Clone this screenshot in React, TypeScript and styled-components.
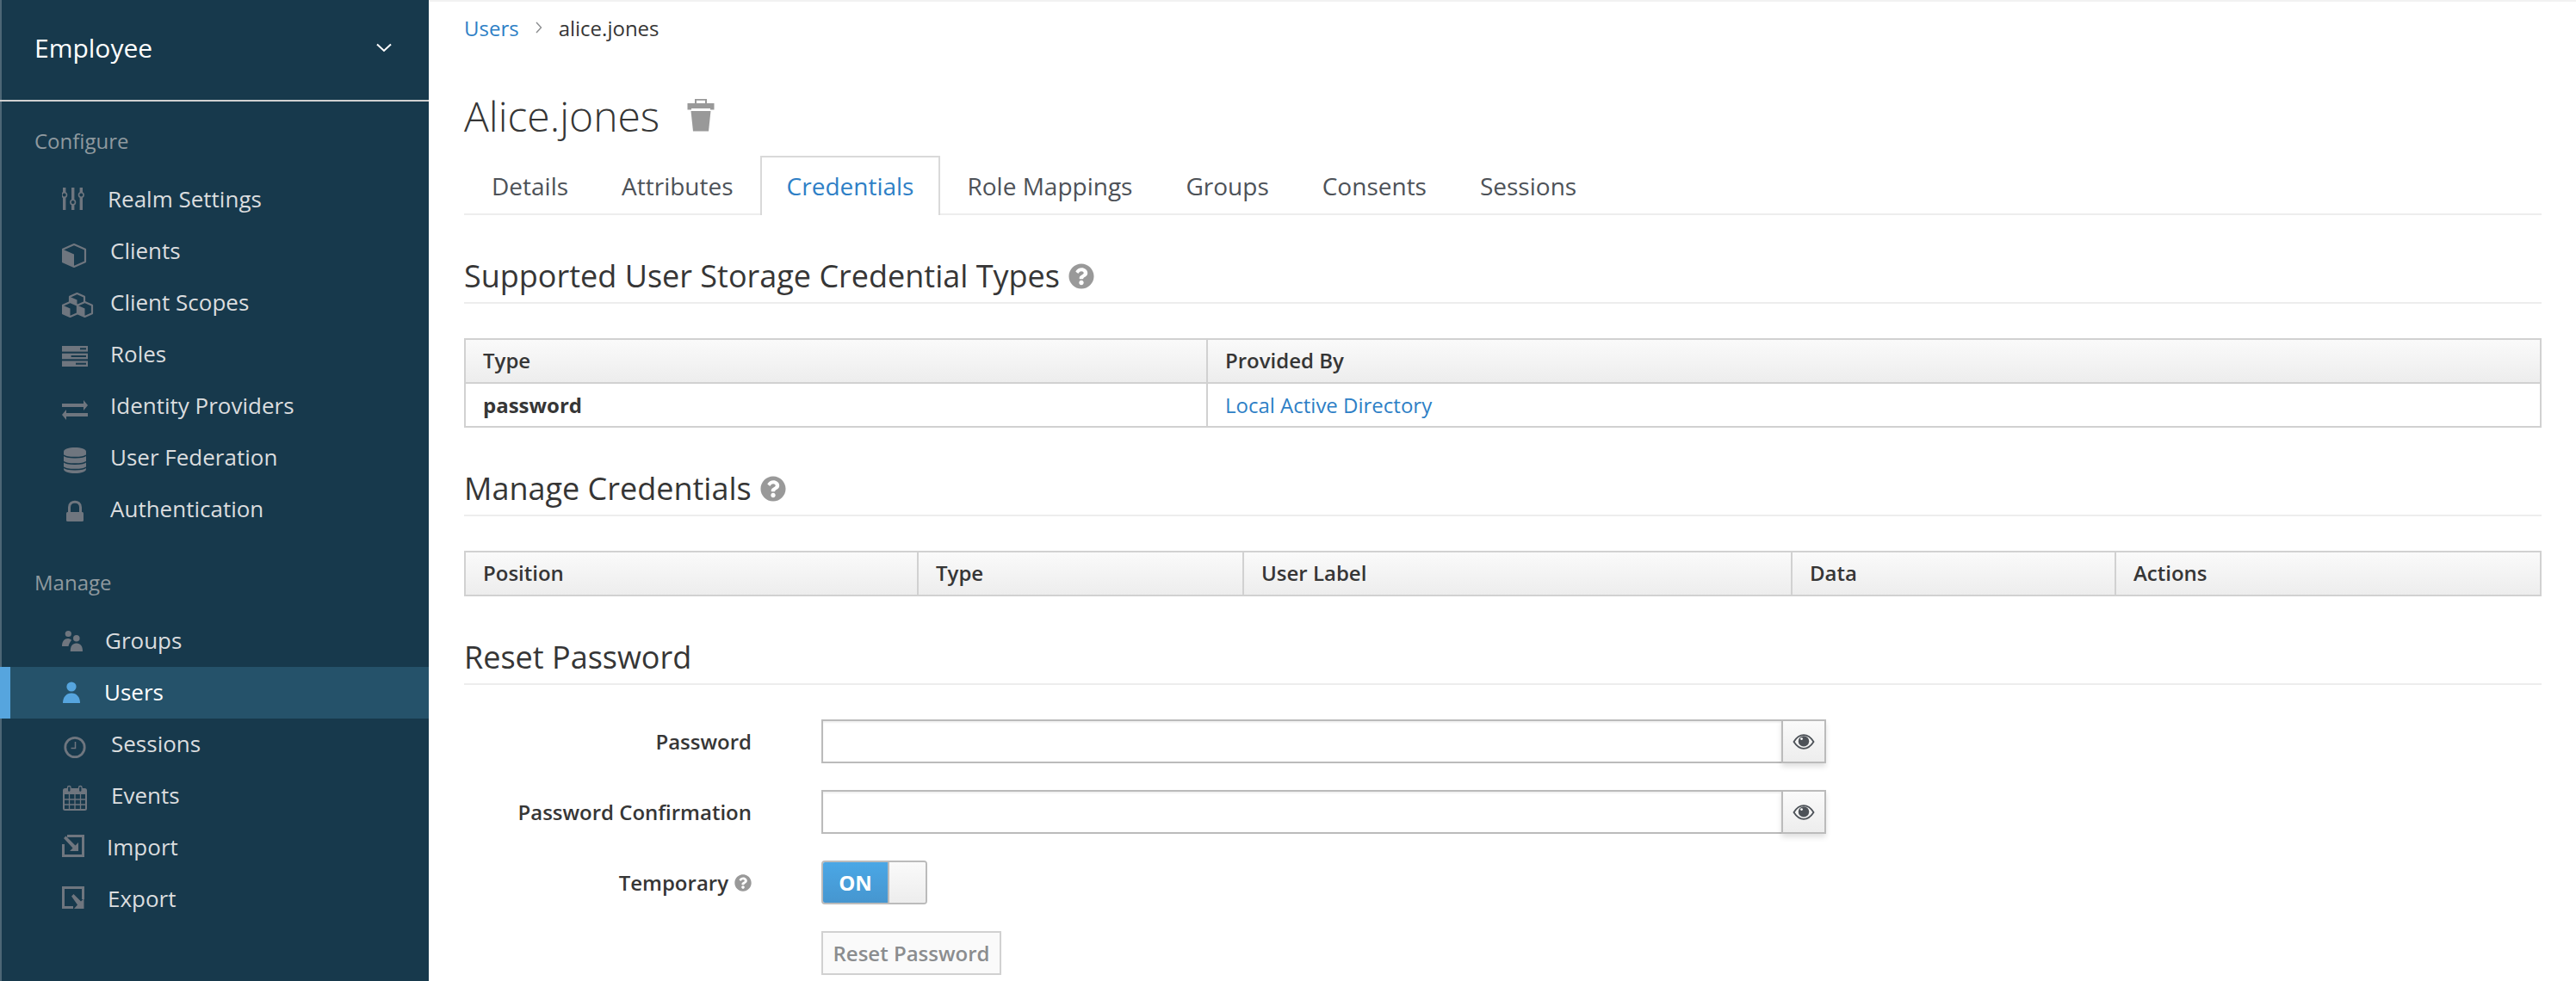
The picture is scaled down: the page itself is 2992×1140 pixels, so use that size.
import { ReactNode } from 'react';
import styled, { createGlobalStyle } from 'styled-components';
import { FaQuestionCircle } from 'react-icons/fa';

const ICON_COLOR = '#6f767f';
const SIDEBAR_BG = '#17394c';

function MiniCube({ x, y, size }: { x: number; y: number; size: number }) {
  const w = size;
  const h = size;
  const cx = x + w / 2;
  const quarter = h * 0.22;
  return (
    <g>
      <path
        d={`M${cx} ${y} L${x + w} ${y + quarter} V${y + h - quarter} L${cx} ${y + h} L${x} ${y + h - quarter} V${y + quarter} Z`}
        fill={SIDEBAR_BG}
        stroke={ICON_COLOR}
        strokeWidth={2.2}
        strokeLinejoin="round"
      />
      <path
        d={`M${x} ${y + quarter} L${cx} ${y + quarter * 2} V${y + h} L${x} ${y + h - quarter} Z`}
        fill={ICON_COLOR}
      />
    </g>
  );
}

const icons: Record<string, ReactNode> = {
  sliders: (
    <>
      <rect x="1" y="6" width="3.4" height="26" fill={ICON_COLOR} />
      <rect x="11" y="6" width="3.4" height="26" fill={ICON_COLOR} />
      <rect x="20.6" y="6" width="3.4" height="26" fill={ICON_COLOR} />
      <circle cx="2.7" cy="14.5" r="2.8" fill={SIDEBAR_BG} stroke={ICON_COLOR} strokeWidth="1.6" />
      <circle cx="12.7" cy="23" r="2.8" fill={SIDEBAR_BG} stroke={ICON_COLOR} strokeWidth="1.6" />
      <circle cx="22.3" cy="14.5" r="2.8" fill={SIDEBAR_BG} stroke={ICON_COLOR} strokeWidth="1.6" />
    </>
  ),
  cube: <MiniCube x={1} y={12} size={26} />,
  cubes: (
    <>
      <MiniCube x={9} y={9} size={17} />
      <MiniCube x={1} y={19} size={17} />
      <MiniCube x={18} y={19} size={17} />
    </>
  ),
  server: (
    <>
      <rect x="0" y="10" width="30" height="6.6" fill={ICON_COLOR} />
      <rect x="0" y="18.7" width="30" height="6.6" fill={ICON_COLOR} />
      <rect x="0" y="27.4" width="30" height="6.6" fill={ICON_COLOR} />
      <rect x="21" y="12.3" width="7" height="2" fill={SIDEBAR_BG} />
      <rect x="10.6" y="21" width="17.4" height="2" fill={SIDEBAR_BG} />
      <rect x="16" y="29.7" width="12" height="2" fill={SIDEBAR_BG} />
    </>
  ),
  exchange: (
    <path
      d="M0 17H25V13L30 19L25 25V21H0ZM30 28H5V24L0 30L5 36V32H30Z"
      fill={ICON_COLOR}
    />
  ),
  database: (
    <>
      <path
        d="M2 13C2 9.5 8 8 15 8S28 9.5 28 13V33C28 36.5 22 38 15 38S2 36.5 2 33Z"
        fill={ICON_COLOR}
      />
      <path
        d="M2 17C5 20.5 25 20.5 28 17M2 24.5C5 28 25 28 28 24.5M2 31C5 34.5 25 34.5 28 31"
        fill="none"
        stroke={SIDEBAR_BG}
        strokeWidth="1.6"
      />
    </>
  ),
  lock: (
    <>
      <path d="M8.5 24V17.5C8.5 9 21.5 9 21.5 17.5V24" fill="none" stroke={ICON_COLOR} strokeWidth="3" />
      <rect x="5" y="23" width="20" height="11" rx="1.5" fill={ICON_COLOR} />
    </>
  ),
  groups: (
    <>
      <circle cx="7.3" cy="11.5" r="3.6" fill={ICON_COLOR} />
      <path d="M0 26C0 20 3 17 7 17C9 17 10.5 18 11 19C9.5 21 8 23 7.5 26Z" fill={ICON_COLOR} />
      <circle cx="16.8" cy="16.8" r="3.8" fill={ICON_COLOR} />
      <path d="M9.7 32C9.7 26 12 22.5 16.8 22.5S24 26 24 32Z" fill={ICON_COLOR} />
    </>
  ),
  user: (
    <>
      <circle cx="11" cy="13" r="5.6" fill="#56a5de" />
      <path d="M1 32C1 25 5 20.5 11 20.5S21 25 21 32Z" fill="#56a5de" />
    </>
  ),
  clock: (
    <>
      <circle cx="15" cy="23.5" r="11.2" fill="none" stroke={ICON_COLOR} strokeWidth="2.8" />
      <path d="M15.5 17V24.5H10.5" fill="none" stroke={ICON_COLOR} strokeWidth="1.5" />
    </>
  ),
  calendar: (
    <>
      <rect x="2" y="12" width="26" height="24" rx="1.5" fill="none" stroke={ICON_COLOR} strokeWidth="2" />
      <rect x="2" y="12" width="26" height="6" fill={ICON_COLOR} />
      <path
        d="M8.5 18V36M15 18V36M21.5 18V36M2 24H28M2 30H28"
        fill="none"
        stroke={ICON_COLOR}
        strokeWidth="1.3"
      />
      <rect x="6.5" y="8.5" width="3.6" height="7" rx="1.8" fill={SIDEBAR_BG} stroke={ICON_COLOR} strokeWidth="1.3" />
      <rect x="19.5" y="8.5" width="3.6" height="7" rx="1.8" fill={SIDEBAR_BG} stroke={ICON_COLOR} strokeWidth="1.3" />
    </>
  ),
  import: (
    <>
      <path d="M6 6.5H24.5V29.5H1.5V16" fill="none" stroke={ICON_COLOR} strokeWidth="3" />
      <path
        d="M2 9L4.5 6.5L15.5 17.5L19 14V24H9L12.5 20.5Z"
        fill={ICON_COLOR}
      />
    </>
  ),
  export: (
    <>
      <path d="M13 29.5H1.5V6.5H24.5V20" fill="none" stroke={ICON_COLOR} strokeWidth="3" />
      <path
        d="M11 16.5L13.5 14L22 22.5L25.5 19V31H14L18 26.5Z"
        fill={ICON_COLOR}
      />
    </>
  ),
};

const configureItems = [
  { label: 'Realm Settings', icon: 'sliders', slot: 53 },
  { label: 'Clients', icon: 'cube', slot: 56 },
  { label: 'Client Scopes', icon: 'cubes', slot: 56 },
  { label: 'Roles', icon: 'server', slot: 56 },
  { label: 'Identity Providers', icon: 'exchange', slot: 56 },
  { label: 'User Federation', icon: 'database', slot: 56 },
  { label: 'Authentication', icon: 'lock', slot: 56 },
];

const manageItems = [
  { label: 'Groups', icon: 'groups', slot: 50 },
  { label: 'Users', icon: 'user', slot: 49, active: true },
  { label: 'Sessions', icon: 'clock', slot: 57 },
  { label: 'Events', icon: 'calendar', slot: 57 },
  { label: 'Import', icon: 'import', slot: 52 },
  { label: 'Export', icon: 'export', slot: 53 },
];

const tabs = ['Details', 'Attributes', 'Credentials', 'Role Mappings', 'Groups', 'Consents', 'Sessions'];

function NavList({ items }: { items: typeof manageItems }) {
  return (
    <NavItems>
      {items.map((item) => (
        <NavItem key={item.label} $active={item.active}>
          <NavIconSlot $slot={item.slot}>
            <NavIcon viewBox="0 0 40 40">{icons[item.icon]}</NavIcon>
          </NavIconSlot>
          <NavLabel>{item.label}</NavLabel>
        </NavItem>
      ))}
    </NavItems>
  );
}

function PasswordField({ label }: { label: string }) {
  return (
    <FormRow>
      <FormLabel>{label}</FormLabel>
      <InputGroup>
        <TextInput type="password" aria-label={label} />
        <EyeButton type="button" aria-label="Show password">
          <svg width="26" height="18" viewBox="0 0 26 18">
            <path
              d="M1.5 9C5 3.5 9 1.2 13 1.2S21 3.5 24.5 9C21 14.5 17 16.8 13 16.8S5 14.5 1.5 9Z"
              fill="none"
              stroke="#4d5258"
              strokeWidth="1.8"
            />
            <circle cx="13" cy="8.4" r="6.2" fill="#4d5258" />
            <circle cx="10.5" cy="5.6" r="1.4" fill="#fff" />
          </svg>
        </EyeButton>
      </InputGroup>
    </FormRow>
  );
}

export default function App() {
  return (
    <>
      <GlobalStyle />
      <Page>
        <Sidebar>
          <RealmSelect>
            Employee
            <svg width="18" height="11" viewBox="0 0 18 11">
              <path d="M1 1.5L9 9L17 1.5" fill="none" stroke="#fff" strokeWidth="2" />
            </svg>
          </RealmSelect>
          <NavHeading $top={27}>Configure</NavHeading>
          <NavList items={configureItems} />
          <NavHeading $top={36}>Manage</NavHeading>
          <NavList items={manageItems} />
        </Sidebar>
        <Main>
          <Breadcrumb>
            <BreadcrumbLink>Users</BreadcrumbLink>
            <svg width="8" height="14" viewBox="0 0 8 14">
              <path d="M1 1L6.5 7L1 13" fill="none" stroke="#8b8d8f" strokeWidth="1.4" />
            </svg>
            <span>alice.jones</span>
          </Breadcrumb>
          <TitleRow>
            <Title>Alice.jones</Title>
            <svg width="32" height="38" viewBox="0 0 32 38">
              <path d="M10 5V0.8H22V5" fill="none" stroke="#999" strokeWidth="2" />
              <path d="M0.5 5H31.5V12.5H27V11H5V12.5H0.5Z" fill="#999" />
              <path d="M4.5 14H27.5L25 37.5H7Z" fill="#999" />
            </svg>
          </TitleRow>
          <Tabs>
            {tabs.map((tab) => (
              <Tab key={tab} $active={tab === 'Credentials'}>
                {tab}
              </Tab>
            ))}
          </Tabs>

          <SectionHeading>
            Supported User Storage Credential Types
            <FaQuestionCircle size={30} color="#999" />
          </SectionHeading>
          <DataTable>
            <colgroup>
              <col width="862" />
              <col />
            </colgroup>
            <thead>
              <tr>
                <HeadCell>Type</HeadCell>
                <HeadCell>Provided By</HeadCell>
              </tr>
            </thead>
            <tbody>
              <tr>
                <BodyCell>
                  <strong>password</strong>
                </BodyCell>
                <BodyCell>
                  <TableLink>Local Active Directory</TableLink>
                </BodyCell>
              </tr>
            </tbody>
          </DataTable>

          <SectionHeading>
            Manage Credentials
            <FaQuestionCircle size={30} color="#999" />
          </SectionHeading>
          <DataTable>
            <colgroup>
              <col width="526" />
              <col width="378" />
              <col width="637" />
              <col width="376" />
              <col />
            </colgroup>
            <thead>
              <tr>
                <HeadCell>Position</HeadCell>
                <HeadCell>Type</HeadCell>
                <HeadCell>User Label</HeadCell>
                <HeadCell>Data</HeadCell>
                <HeadCell>Actions</HeadCell>
              </tr>
            </thead>
          </DataTable>

          <SectionHeading>Reset Password</SectionHeading>
          <Form>
            <PasswordField label="Password" />
            <PasswordField label="Password Confirmation" />
            <FormRow>
              <FormLabel>
                Temporary
                <FaQuestionCircle size={20} color="#999" />
              </FormLabel>
              <Toggle>
                <ToggleOn>ON</ToggleOn>
                <ToggleHandle />
              </Toggle>
            </FormRow>
            <FormRow>
              <FormLabel />
              <ResetButton type="button">Reset Password</ResetButton>
            </FormRow>
          </Form>
        </Main>
      </Page>
    </>
  );
}

const GlobalStyle = createGlobalStyle`
  html, body {
    margin: 0;
    padding: 0;
    background: #fff;
  }

  body {
    font-family: 'Open Sans', 'Noto Sans', sans-serif;
    color: #363636;
  }
`;

const Page = styled.div`
  display: flex;
  width: 2992px;
  height: 1140px;
  overflow: hidden;
`;

const Sidebar = styled.nav`
  flex: none;
  width: 498px;
  background: ${SIDEBAR_BG};
  box-shadow: inset 2px 0 0 #4d6676;
`;

const RealmSelect = styled.div`
  display: flex;
  align-items: center;
  justify-content: space-between;
  box-sizing: border-box;
  height: 118px;
  padding: 0 43px 6px 40px;
  border-bottom: 2px solid #d1d1d1;
  font-size: 30px;
  color: #fff;
`;

const NavHeading = styled.div<{ $top: number }>`
  margin: ${(p) => p.$top}px 0 17px 40px;
  height: 40px;
  line-height: 38px;
  font-size: 24px;
  color: #8f999f;
`;

const NavItems = styled.ul`
  margin: 0;
  padding: 0;
  list-style: none;
`;

const NavItem = styled.li<{ $active?: boolean }>`
  display: flex;
  align-items: center;
  box-sizing: border-box;
  height: 60px;
  padding-left: 72px;
  font-size: 26px;
  color: ${(p) => (p.$active ? '#fff' : '#dbdddf')};
  background: ${(p) => (p.$active ? '#25526a' : 'transparent')};
  box-shadow: ${(p) => (p.$active ? 'inset 12px 0 0 #56a5de' : 'none')};
`;

const NavIconSlot = styled.span<{ $slot: number }>`
  flex: none;
  display: flex;
  align-items: center;
  width: ${(p) => p.$slot}px;
  height: 40px;
`;

const NavIcon = styled.svg`
  flex: none;
  width: 40px;
  height: 40px;
`;

const NavLabel = styled.span`
  padding-bottom: 2px;
`;

const Main = styled.main`
  flex: 1;
  min-width: 0;
  box-sizing: border-box;
  padding: 0 40px 0 41px;
  border-top: 2px solid #f1f1f1;
`;

const Breadcrumb = styled.div`
  display: flex;
  align-items: center;
  gap: 19px;
  height: 60px;
  font-size: 24px;
`;

const BreadcrumbLink = styled.a`
  color: #2e7fc6;
`;

const TitleRow = styled.div`
  display: flex;
  align-items: center;
  gap: 32px;
  height: 60px;
  margin-top: 42px;
`;

const Title = styled.h1`
  margin: 0;
  font-size: 48px;
  font-weight: 300;
  color: #363636;
`;

const Tabs = styled.div`
  display: flex;
  box-sizing: border-box;
  height: 69px;
  margin-top: 17px;
  padding-left: 1px;
  border-bottom: 2px solid #ededed;
`;

const Tab = styled.div<{ $active?: boolean }>`
  display: flex;
  align-items: center;
  box-sizing: border-box;
  height: ${(p) => (p.$active ? '69px' : '67px')};
  padding: 0 29px;
  font-size: 28px;
  color: ${(p) => (p.$active ? '#2e7fc6' : '#4d5258')};
  background: ${(p) => (p.$active ? '#fff' : 'transparent')};
  border: 2px solid ${(p) => (p.$active ? '#d9d9d9' : 'transparent')};
  border-bottom: none;
  padding-bottom: ${(p) => (p.$active ? '2px' : '0')};
`;

const SectionHeading = styled.h2`
  display: flex;
  align-items: center;
  gap: 10px;
  box-sizing: border-box;
  height: 61px;
  margin: 42px 0 40px;
  padding-bottom: 2px;
  border-bottom: 2px solid #ededed;
  font-size: 36px;
  font-weight: 400;
  color: #363636;
`;

const DataTable = styled.table`
  width: 100%;
  table-layout: fixed;
  border-collapse: collapse;
  font-size: 24px;
`;

const HeadCell = styled.th`
  box-sizing: border-box;
  height: 51px;
  padding: 0 20px 3px;
  text-align: left;
  font-weight: 600;
  color: #363636;
  background: linear-gradient(#fafafa, #ededed);
  border: 2px solid #d1d1d1;
`;

const BodyCell = styled.td`
  box-sizing: border-box;
  height: 51px;
  padding: 0 20px 1px;
  border: 2px solid #d1d1d1;

  strong {
    font-weight: 700;
  }
`;

const TableLink = styled.a`
  color: #2e7fc6;
`;

const Form = styled.form`
  display: flex;
  flex-direction: column;
  gap: 31px;
`;

const FormRow = styled.div`
  display: flex;
  align-items: center;
  gap: 81px;
  min-height: 51px;
`;

const FormLabel = styled.label`
  flex: none;
  display: flex;
  align-items: center;
  justify-content: flex-end;
  gap: 7px;
  width: 334px;
  font-size: 24px;
  font-weight: 600;
  color: #363636;
`;

const InputGroup = styled.div`
  display: flex;
  width: 1167px;
  height: 51px;
`;

const TextInput = styled.input`
  flex: 1;
  min-width: 0;
  box-sizing: border-box;
  padding: 0 12px;
  border: 2px solid #bbb;
  border-right: none;
  background: #fff;
  box-shadow: inset 0 2px 2px rgba(3, 3, 3, 0.06);
  outline: none;
`;

const EyeButton = styled.button`
  flex: none;
  display: flex;
  align-items: center;
  justify-content: center;
  box-sizing: border-box;
  width: 52px;
  padding: 0;
  border: 2px solid #bbb;
  background: linear-gradient(#fafafa, #ededed);
  box-shadow: 0 4px 6px rgba(3, 3, 3, 0.12);
`;

const Toggle = styled.div`
  display: flex;
  box-sizing: border-box;
  width: 123px;
  height: 51px;
  border: 2px solid #bbb;
  border-radius: 4px;
  overflow: hidden;
`;

const ToggleOn = styled.span`
  display: flex;
  align-items: center;
  justify-content: center;
  width: 75px;
  font-size: 24px;
  font-weight: 700;
  color: #fff;
  background: linear-gradient(#4aa7e6, #4696cf);
`;

const ToggleHandle = styled.span`
  flex: 1;
  border-left: 2px solid #bbb;
  background: linear-gradient(#fafafa, #ededed);
`;

const ResetButton = styled.button`
  box-sizing: border-box;
  width: 209px;
  height: 51px;
  padding: 0;
  border: 2px solid #d1d1d1;
  background: #fafafa;
  font-family: inherit;
  font-size: 24px;
  font-weight: 600;
  color: #8b8d8f;
`;
